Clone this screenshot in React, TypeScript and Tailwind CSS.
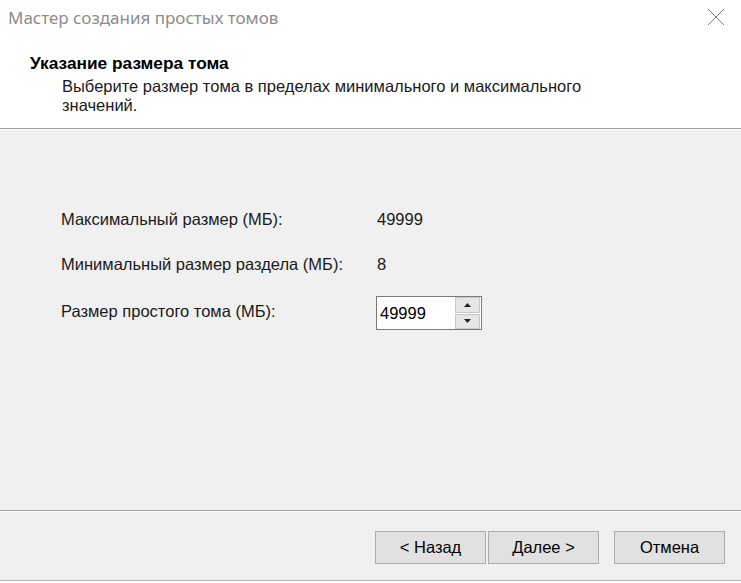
export default function App() {
  const label = "text-[16.5px] text-[#1a1a1a]";
  const btn = "w-[111px] h-[33px] bg-[#e1e1e1] border border-[#adadad] text-[16.5px] text-black";
  return (
    <div className="w-[741px] h-[583px] bg-[#f0f0f0] flex flex-col overflow-hidden font-['Liberation_Sans',Arial,sans-serif]">
      {/* title bar + header */}
      <div className="bg-white h-[128px] flex flex-col shrink-0">
        <div className="h-[36px] flex items-center justify-between pl-[8px] pr-[16px]">
          <span className="text-[17px] text-[#8c8c8c] font-['Noto_Sans',sans-serif]">Мастер создания простых томов</span>
          <svg width="18" height="18" viewBox="0 0 18 18" className="mb-[2px]">
            <path d="M1 1 L17 17 M17 1 L1 17" stroke="#7a7a7a" strokeWidth="1" />
          </svg>
        </div>
        <div className="pl-[30px] pt-[18px]">
          <div className="text-[17.3px] font-bold text-black leading-[19px]">Указание размера тома</div>
          <div className="pl-[32px] text-[16.5px] text-[#1a1a1a] leading-[19px] mt-[4px] w-[580px]">
            Выберите размер тома в пределах минимального и максимального значений.
          </div>
        </div>
      </div>
      <div className="h-px bg-[#a0a0a0] shrink-0" />
      <div className="h-px bg-white shrink-0" />
      {/* body */}
      <div className="h-[380px] shrink-0 pl-[61px] pt-[80px] flex flex-col gap-[26px]">
        <div className="flex items-center h-[19px]">
          <span className={`${label} w-[316px]`}>Максимальный размер (МБ):</span>
          <span className={label}>49999</span>
        </div>
        <div className="flex items-center h-[19px]">
          <span className={`${label} w-[316px]`}>Минимальный размер раздела (МБ):</span>
          <span className={label}>8</span>
        </div>
        <div className="flex items-start h-[19px] -mt-[1px]">
          <span className={`${label} w-[315px]`}>Размер простого тома (МБ):</span>
          <div className="w-[106px] h-[34px] border border-[#7a7a7a] bg-white flex items-center -mt-[3px]">
            <span className="text-[16.5px] text-black pl-[3px] flex-1 mt-[1px]">49999</span>
            <div className="flex flex-col w-[25px] h-[32px] mr-px gap-px">
              <div className="flex-1 bg-[#e6e6e6] border border-[#c8c8c8] flex items-center justify-center">
                <svg width="7" height="4" viewBox="0 0 7 4"><path d="M3.5 0 L7 4 L0 4 Z" fill="#222" /></svg>
              </div>
              <div className="flex-1 bg-[#e6e6e6] border border-[#c8c8c8] flex items-center justify-center">
                <svg width="7" height="4" viewBox="0 0 7 4"><path d="M0 0 L7 0 L3.5 4 Z" fill="#222" /></svg>
              </div>
            </div>
          </div>
        </div>
      </div>
      <div className="h-px bg-[#a0a0a0] shrink-0" />
      <div className="h-px bg-white shrink-0" />
      {/* buttons */}
      <div className="h-[68px] shrink-0 flex items-center pl-[375px] pt-[2px]">
        <button className={btn}>&lt; Назад</button>
        <button className={`${btn} ml-[2px]`}>Далее &gt;</button>
        <button className={`${btn} ml-[15px]`}>Отмена</button>
      </div>
      <div className="h-px bg-[#b4b4b4] shrink-0" />
      <div className="flex-1 bg-white" />
    </div>
  );
}
